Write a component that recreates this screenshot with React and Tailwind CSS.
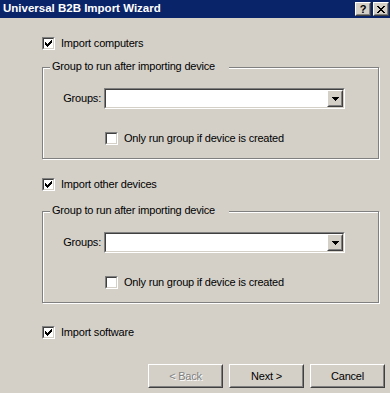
import React from 'react';

// Win2000 classic palette
// face #d4d0c8, light #ffffff, shadow #808080, dark shadow #404040

function Check() {
  return (
    <svg width="7" height="7" viewBox="0 0 7 7" shapeRendering="crispEdges">
      <path
        d="M0 2h1v3H0zM1 3h1v3H1zM2 4h1v3H2zM3 3h1v3H3zM4 2h1v3H4zM5 1h1v3H5zM6 0h1v3H6z"
        fill="#000"
      />
    </svg>
  );
}

function Arrow() {
  return (
    <svg width="7" height="4" viewBox="0 0 7 4" shapeRendering="crispEdges">
      <path d="M0 0h7v1H0zM1 1h5v1H1zM2 2h3v1H2zM3 3h1v1H3z" fill="#000" />
    </svg>
  );
}

function Raised({ className = '', children }) {
  return (
    <div className={'border border-t-white border-l-white border-r-[#404040] border-b-[#404040] ' + className}>
      <div className="w-full h-full border border-t-[#d4d0c8] border-l-[#d4d0c8] border-r-[#808080] border-b-[#808080] bg-[#d4d0c8] flex items-center justify-center">
        {children}
      </div>
    </div>
  );
}

function Sunken({ className = '', children }) {
  return (
    <div className={'border border-t-[#808080] border-l-[#808080] border-r-white border-b-white ' + className}>
      <div className="w-full h-full border border-t-[#404040] border-l-[#404040] border-r-[#d4d0c8] border-b-[#d4d0c8] bg-white flex items-center justify-end">
        {children}
      </div>
    </div>
  );
}

function CheckBox({ checked, label, className = '' }) {
  return (
    <div className={'flex items-center h-[13px] ' + className}>
      <Sunken className="w-[13px] h-[13px] shrink-0">
        <div className="w-full h-full flex items-center justify-center">{checked && <Check />}</div>
      </Sunken>
      <span className="ml-[6px] leading-none">{label}</span>
    </div>
  );
}

function GroupBox({ className = '' }) {
  return (
    <div className={'relative h-[92px] border border-[#808080] shadow-[inset_1px_1px_0_#fff,1px_1px_0_#fff] ' + className}>
      <span className="absolute left-[7px] top-[-7px] pl-[2px] pr-[14px] bg-[#d4d0c8] leading-none">
        Group to run after importing device
      </span>
      <div className="flex items-center mt-[20px]">
        <span className="w-[58px] text-right leading-none">Groups:</span>
        <Sunken className="ml-[3px] w-[241px] h-[21px]">
          <Raised className="w-[16px] h-full">
            <Arrow />
          </Raised>
        </Sunken>
      </div>
      <CheckBox className="ml-[62px] mt-[23px]" label="Only run group if device is created" />
    </div>
  );
}

function Button({ children, disabled }) {
  return (
    <Raised className="w-[75px] h-[24px]">
      <span
        className={
          disabled
            ? 'text-[#808080] [text-shadow:1px_1px_0_#fff] leading-none'
            : 'text-black leading-none'
        }
      >
        {children}
      </span>
    </Raised>
  );
}

export default function App() {
  return (
    <div
      className="w-[390px] h-[393px] bg-[#d4d0c8] flex flex-col overflow-hidden text-[11px] tracking-[-0.2px] text-black"
      style={{ fontFamily: '"Liberation Sans", Arial, sans-serif' }}
    >
      {/* Title bar */}
      <div className="h-[18px] bg-[#0a246a] flex items-center pl-[3px] pr-[1px] shrink-0">
        <span className="flex-1 text-white font-bold text-[11.5px] tracking-normal leading-none">
          Universal B2B Import Wizard
        </span>
        <Raised className="w-[16px] h-[14px]">
          <span className="font-bold text-[11px] leading-none">?</span>
        </Raised>
        <Raised className="w-[16px] h-[14px] ml-[2px]">
          <svg width="8" height="7" viewBox="0 0 8 7" shapeRendering="crispEdges">
            <path d="M0 0h2v1H0zM6 0h2v1H6zM1 1h2v1H1zM5 1h2v1H5zM2 2h4v1H2zM3 3h2v1H3zM2 4h4v1H2zM1 5h2v1H1zM5 5h2v1H5zM0 6h2v1H0zM6 6h2v1H6z" fill="#000" />
          </svg>
        </Raised>
      </div>

      {/* Options */}
      <div className="flex flex-col pl-[42px] pr-[11px] pt-[19px]">
        <CheckBox checked label="Import computers" />
        <GroupBox className="mt-[17px]" />
        <CheckBox checked className="mt-[19px]" label="Import other devices" />
        <GroupBox className="mt-[20px]" />
        <CheckBox checked className="mt-[23px]" label="Import software" />
      </div>

      {/* Wizard buttons */}
      <div className="mt-auto flex justify-end gap-[6px] pr-[5px] pb-[5px]">
        <Button disabled>&lt; Back</Button>
        <Button>Next &gt;</Button>
        <Button>Cancel</Button>
      </div>
    </div>
  );
}
